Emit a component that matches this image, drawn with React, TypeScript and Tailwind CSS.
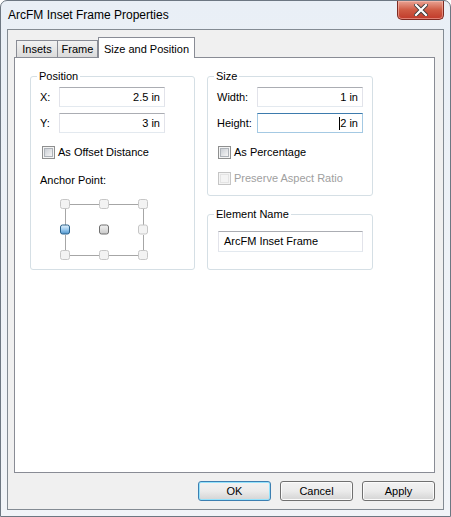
import React from 'react';

const FONT = "font-['Liberation_Sans',Arial,sans-serif]";

function TextBox({
  value,
  width,
  height = 20,
  focused = false,
  align = 'right',
  caret = false,
}: {
  value: string,
  width: string,
  height?: number,
  focused?: boolean,
  align?: 'left' | 'right',
  caret?: boolean,
}) {
  const border = focused
    ? 'border-[#a4c9e3] border-t-[#3d7bad]'
    : 'border-[#e2e3ea] border-t-[#abadb3] border-b-[#e3e9ef]';
  return (
    <div
      className={`${width} ${height === 21 ? 'h-[21px]' : 'h-[20px]'} border ${border} bg-white flex items-center text-[11px] text-black ${
        align === 'right' ? 'justify-end pr-[4px]' : 'justify-start pl-[5px]'
      }`}
    >
      {caret && <span className="w-px h-[13px] bg-black" />}
      <span>{value}</span>
    </div>
  );
}

function CheckBox({ label, disabled = false }: { label: string, disabled?: boolean }) {
  return (
    <div className="flex items-center h-[13px]">
      <span
        className={`w-[13px] h-[13px] border flex items-center justify-center ${
          disabled ? 'border-[#c5c5c5] bg-[#f4f4f4]' : 'border-[#8e8f8f] bg-[#f4f4f4]'
        }`}
      >
        <span
          className={`w-[9px] h-[9px] border ${
            disabled
              ? 'border-[#e4e4e4] bg-[#f4f4f4]'
              : 'border-[#aeb3b9] bg-gradient-to-br from-[#cbcfd5] to-[#f6f6f6]'
          }`}
        />
      </span>
      <span className={`ml-[3px] text-[11px] leading-[13px] ${disabled ? 'text-[#a0a0a0]' : 'text-black'}`}>
        {label}
      </span>
    </div>
  );
}

function GroupBox({
  title,
  height,
  children,
}: {
  title: string,
  height: string,
  children: React.ReactNode,
}) {
  return (
    <fieldset className={`${height} border border-[#d5dfe5] rounded-[3px] m-0 p-0 min-w-0`}>
      <legend className="ml-[6px] px-[2px] text-[11px] leading-[13px] text-black">{title}</legend>
      {children}
    </fieldset>
  );
}

function AnchorGrid() {
  const cols = [1.5, 40.5, 79.5];
  const rows = [1.5, 27, 52.5];
  return (
    <svg width="90" height="64" viewBox="0 0 90 64">
      <defs>
        <linearGradient id="blue" x1="0" y1="0" x2="0" y2="1">
          <stop offset="0" stopColor="#e4f3fd" />
          <stop offset="0.5" stopColor="#9ccbef" />
          <stop offset="1" stopColor="#4f94cc" />
        </linearGradient>
        <linearGradient id="gray" x1="0" y1="0" x2="0" y2="1">
          <stop offset="0" stopColor="#f2f2f2" />
          <stop offset="1" stopColor="#c9c9c9" />
        </linearGradient>
      </defs>
      <g stroke="#a6a6a6" strokeWidth="1">
        <line x1="11" y1="6.5" x2="40" y2="6.5" />
        <line x1="50" y1="6.5" x2="79" y2="6.5" />
        <line x1="11" y1="57.5" x2="40" y2="57.5" />
        <line x1="50" y1="57.5" x2="79" y2="57.5" />
        <line x1="6.5" y1="11" x2="6.5" y2="27" />
        <line x1="6.5" y1="37" x2="6.5" y2="52" />
        <line x1="84.5" y1="11" x2="84.5" y2="27" />
        <line x1="84.5" y1="37" x2="84.5" y2="52" />
      </g>
      {rows.map((y, ri) =>
        cols.map((x, ci) => {
          const selected = ri === 1 && ci === 0;
          const center = ri === 1 && ci === 1;
          return (
            <rect
              key={`${ri}-${ci}`}
              x={x}
              y={y}
              width="9"
              height="9"
              rx="2"
              fill={selected ? 'url(#blue)' : center ? 'url(#gray)' : '#f3f3f3'}
              stroke={selected ? '#2c628b' : center ? '#6f6f6f' : '#c6c6c6'}
              strokeWidth="1"
            />
          );
        }),
      )}
    </svg>
  );
}

function Button({ label, isDefault = false }: { label: string, isDefault?: boolean }) {
  return (
    <div
      className={`w-[73px] h-[20px] rounded-[3px] border flex items-center justify-center text-[11px] text-black bg-gradient-to-b from-[#f2f2f2] via-[#ebebeb] to-[#d4d4d4] ${
        isDefault ? 'border-[#3c7fb1] shadow-[inset_0_0_0_1px_#94e2fc]' : 'border-[#707070] shadow-[inset_0_0_0_1px_#fbfbfb]'
      }`}
    >
      {label}
    </div>
  );
}

export default function App() {
  return (
    <div
      className={`${FONT} w-[451px] h-[517px] rounded-t-[7px] border border-[#6d7782] bg-gradient-to-b from-[#e9eff6] via-[#eef2f7] to-[#f1f4f8] flex flex-col`}
    >
      {/* title bar */}
      <div className="h-[28px] flex items-start shrink-0">
        <div className="pl-[7px] pt-[7px] text-[12px] leading-[15px] text-black">ArcFM Inset Frame Properties</div>
        <div className="ml-auto mr-[6px] w-[47px] h-[19px] rounded-b-[5px] border border-t-0 border-[#7d2a22] bg-gradient-to-b from-[#e8a293] via-[#cf5a43] to-[#c0392a] flex items-center justify-center shadow-[inset_0_0_0_1px_rgba(255,200,190,0.5)]">
          <svg width="14" height="12" viewBox="0 0 14 12">
            <path d="M2 1 L12 11 M12 1 L2 11" stroke="#3b3b3b" strokeWidth="4" strokeLinecap="square" />
            <path d="M2 1 L12 11 M12 1 L2 11" stroke="#ffffff" strokeWidth="2.2" strokeLinecap="square" />
          </svg>
        </div>
      </div>

      {/* client area */}
      <div className="flex-1 mx-[6px] mb-[6px] border border-[#838b93] bg-[#f0f0f0] flex flex-col">
        <div className="ml-[6px] mt-[7px] w-[421px] flex flex-col">
          {/* tabs */}
          <div className="h-[20px] pl-[2px] flex items-end">
            <div className="w-[42px] h-[17px] border border-b-0 border-[#898c95] bg-gradient-to-b from-[#f2f2f2] to-[#dbdbdb] text-[11px] flex items-center justify-center text-black">
              Insets
            </div>
            <div className="w-[40px] h-[17px] border border-b-0 border-l-0 border-[#898c95] bg-gradient-to-b from-[#f2f2f2] to-[#dbdbdb] text-[11px] flex items-center justify-center text-black">
              Frame
            </div>
            <div className="w-[97px] h-[21px] -mb-px relative z-10 border border-b-0 border-[#898c95] bg-white text-[11px] flex items-start pt-[3px] justify-center text-black">
              Size and Position
            </div>
          </div>

          {/* page */}
          <div className="h-[416px] border border-[#898c95] bg-white pl-[15px] pt-[12px] flex gap-[12px]">
            <div className="w-[165px]">
              <GroupBox title="Position" height="h-[200px]">
                <div className="pl-[9px] pt-[4px] flex flex-col">
                  <div className="flex items-center">
                    <span className="w-[19px] text-[11px]">X:</span>
                    <TextBox value="2.5 in" width="w-[106px]" />
                  </div>
                  <div className="flex items-center mt-[6px]">
                    <span className="w-[19px] text-[11px]">Y:</span>
                    <TextBox value="3 in" width="w-[106px]" />
                  </div>
                  <div className="mt-[13px] pl-[2px]">
                    <CheckBox label="As Offset Distance" />
                  </div>
                  <div className="mt-[15px] text-[11px] leading-[13px]">Anchor Point:</div>
                  <div className="mt-[11px] pl-[19px]">
                    <AnchorGrid />
                  </div>
                </div>
              </GroupBox>
            </div>

            <div className="w-[166px] flex flex-col gap-[12px]">
              <GroupBox title="Size" height="h-[126px]">
                <div className="pl-[9px] pt-[4px] flex flex-col">
                  <div className="flex items-center">
                    <span className="w-[40px] text-[11px]">Width:</span>
                    <TextBox value="1 in" width="w-[106px]" />
                  </div>
                  <div className="flex items-center mt-[6px]">
                    <span className="w-[40px] text-[11px]">Height:</span>
                    <TextBox value="2 in" width="w-[106px]" focused caret />
                  </div>
                  <div className="mt-[13px] pl-[1px]">
                    <CheckBox label="As Percentage" />
                  </div>
                  <div className="mt-[13px] pl-[1px]">
                    <CheckBox label="Preserve Aspect Ratio" disabled />
                  </div>
                </div>
              </GroupBox>
              <GroupBox title="Element Name" height="h-[62px]">
                <div className="pl-[10px] pt-[10px]">
                  <TextBox value="ArcFM Inset Frame" width="w-[145px]" height={21} align="left" />
                </div>
              </GroupBox>
            </div>
          </div>

          {/* buttons */}
          <div className="mt-[8px] flex justify-end gap-[9px]">
            <Button label="OK" isDefault />
            <Button label="Cancel" />
            <Button label="Apply" />
          </div>
        </div>
      </div>
    </div>
  );
}
